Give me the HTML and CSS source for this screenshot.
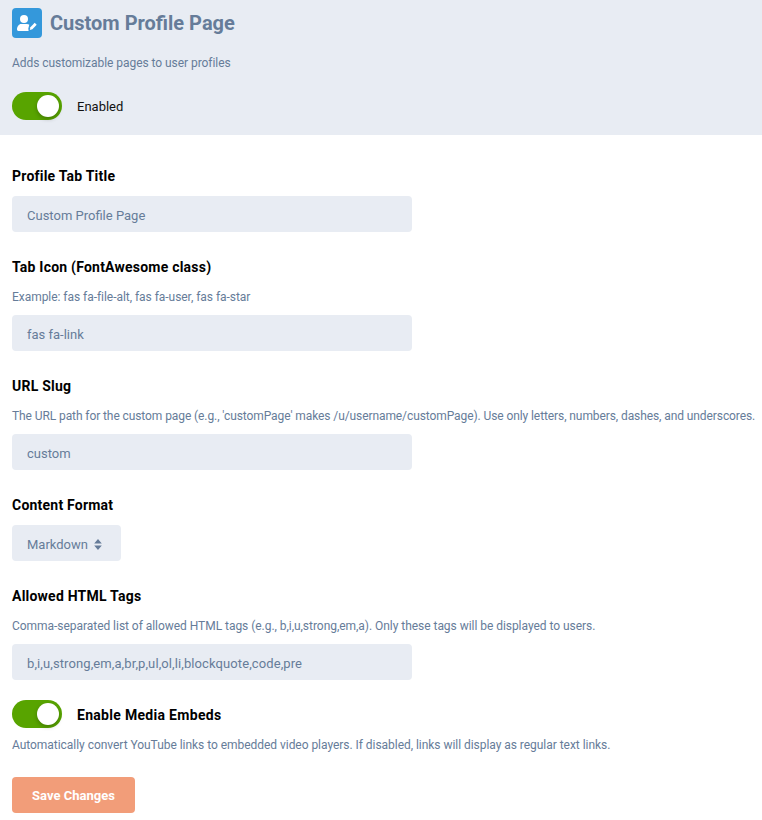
FILE: index.html
```html
<!DOCTYPE html>
<html lang="en">
<head>
<meta charset="utf-8">
<title>Custom Profile Page</title>
<link rel="stylesheet" href="styles.css">
</head>
<body>
<header class="header">
  <div class="title-row">
    <span class="ext-icon">
      <svg width="20" height="16" viewBox="0 0 20 16" fill="#fff">
        <circle cx="7" cy="4" r="4"/>
        <path d="M4.200 9h5.600c1 0 1.900.3 2.500.8l-1 3.700.3 2.500H1.400C.6 16 0 15.400 0 14.600 0 11.500 1.800 9 4.200 9z"/>
        <path d="M12.800 14.900l.6-2.600 4.300-4.500 2 2-4.300 4.500z"/>
      </svg>
    </span>
    <h1 class="title">Custom Profile Page</h1>
  </div>
  <p class="desc">Adds customizable pages to user profiles</p>
  <div class="toggle-row">
    <span class="switch"><span class="knob"></span></span>
    <span class="toggle-text">Enabled</span>
  </div>
</header>
<main class="form">
  <section class="group">
    <label class="label">Profile Tab Title</label>
    <div class="input">Custom Profile Page</div>
  </section>
  <section class="group">
    <label class="label">Tab Icon (FontAwesome class)</label>
    <p class="help">Example: fas fa-file-alt, fas fa-user, fas fa-star</p>
    <div class="input">fas fa-link</div>
  </section>
  <section class="group">
    <label class="label">URL Slug</label>
    <p class="help help-long">The URL path for the custom page (e.g., 'customPage' makes /u/username/customPage). Use only letters, numbers, dashes, and underscores.</p>
    <div class="input">custom</div>
  </section>
  <section class="group">
    <label class="label">Content Format</label>
    <div class="select">
      <span class="select-text">Markdown</span>
      <svg class="carets" width="8" height="11" viewBox="0 0 9 13" fill="#667c99"><path d="M4.500 0L9 5.400H0zM4.500 13L0 7.600h9z"/></svg>
    </div>
  </section>
  <section class="group group-tight">
    <label class="label">Allowed HTML Tags</label>
    <p class="help">Comma-separated list of allowed HTML tags (e.g., b,i,u,strong,em,a). Only these tags will be displayed to users.</p>
    <div class="input input-tags">b,i,u,strong,em,a,br,p,ul,ol,li,blockquote,code,pre</div>
  </section>
  <section class="group group-last">
    <div class="toggle-row">
      <span class="switch"><span class="knob"></span></span>
      <span class="label-inline">Enable Media Embeds</span>
    </div>
    <p class="help help-below">Automatically convert YouTube links to embedded video players. If disabled, links will display as regular text links.</p>
  </section>
  <button class="save" type="button">Save Changes</button>
</main>
</body>
</html>
```
FILE: styles.css
```css
* { box-sizing: border-box; }
html, body { margin: 0; padding: 0; }
body {
  width: 762px;
  height: 820px;
  overflow: hidden;
  background: #fff;
  color: #111;
  font-family: Roboto, "Open Sans", sans-serif;
  font-size: 13px;
  line-height: 1.5;
}
.header {
  height: 135px;
  background: #e8ecf3;
  padding: 8px 12px 0;
}
.title-row { display: flex; align-items: center; gap: 8px; height: 30px; }
.ext-icon {
  width: 30px;
  height: 30px;
  border-radius: 4px;
  background: #3498db;
  display: flex;
  align-items: center;
  justify-content: center;
}
.title {
  margin: 0;
  font-size: 20px;
  font-weight: 700;
  line-height: 30px;
  color: #667c99;
}
.desc {
  margin: 16px 0 0;
  font-size: 12px;
  line-height: 18px;
  letter-spacing: -0.05px;
  color: #667c99;
}
.toggle-row { display: flex; align-items: center; gap: 15px; height: 28px; }
.header .toggle-row { margin-top: 20px; }
.switch {
  width: 50px;
  height: 28px;
  border-radius: 14px;
  background: #58a400;
  position: relative;
  flex: none;
}
.knob {
  position: absolute;
  top: 3px;
  left: 25px;
  width: 22px;
  height: 22px;
  border-radius: 50%;
  background: #fff;
  box-shadow: 0 2px 4px rgba(0, 0, 0, .25);
}
.toggle-text { font-size: 13px; color: #111; padding-top: 2px; }
.form { padding: 31px 0 0 12px; }
.group { margin-bottom: 25px; }
.group-tight { margin-bottom: 20px; }
.group-last { margin-bottom: 23px; }
.label {
  display: block;
  font-size: 14px;
  font-weight: 700;
  line-height: 20px;
  letter-spacing: 0.22px;
  color: #000;
  margin-bottom: 10px;
}
.label-inline {
  font-size: 14px;
  font-weight: 700;
  letter-spacing: 0.3px;
  padding-top: 2px;
  color: #000;
}
.help {
  margin: 0 0 9px;
  padding-top: 1px;
  font-size: 12px;
  line-height: 18px;
  letter-spacing: -0.04px;
  color: #667c99;
  white-space: nowrap;
}
.help-long { letter-spacing: -0.09px; }
.help-below { margin: 8px 0 0; padding-top: 0; }
.input {
  width: 400px;
  height: 36px;
  padding: 0 15px;
  border-radius: 4px;
  background: #e8ecf3;
  color: #667c99;
  font-size: 13px;
  line-height: 39px;
}
.input-tags { letter-spacing: 0.1px; }
.select {
  display: inline-flex;
  align-items: center;
  gap: 6px;
  width: 109px;
  height: 36px;
  padding: 0 15px;
  border-radius: 4px;
  background: #e8ecf3;
  color: #667c99;
  font-size: 13px;
  vertical-align: top;
}
.select-text { padding-top: 3px; }
.carets { margin-top: 2px; }
.save {
  display: block;
  width: 123px;
  height: 36px;
  padding: 0;
  border: 0;
  border-radius: 4px;
  background: #f29d79;
  color: #fff;
  font-family: inherit;
  font-size: 13px;
  font-weight: 700;
}
```
